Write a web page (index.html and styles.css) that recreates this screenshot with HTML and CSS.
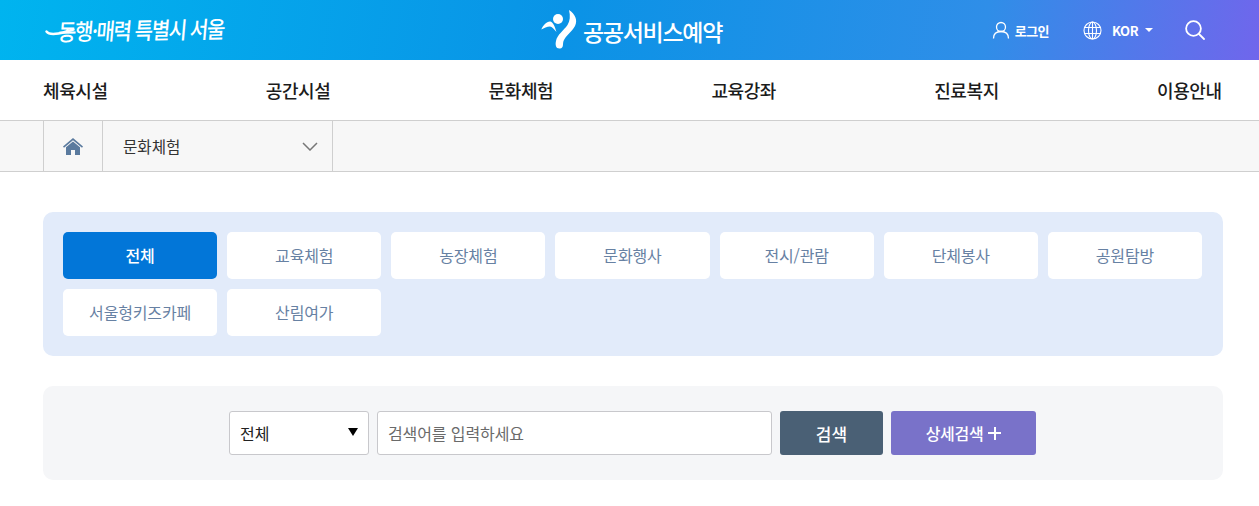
FILE: index.html
```html
<!DOCTYPE html>
<html lang="ko">
<head>
<meta charset="utf-8">
<title>공공서비스예약</title>
<link rel="stylesheet" href="styles.css">
</head>
<body>
<header class="top">
  <div class="wrap top-in">
    <a class="slogan">
      <svg class="flourish" width="30" height="10" viewBox="0 0 30 10" fill="none" stroke="#fff" stroke-width="2.400" stroke-linecap="round"><path d="M1.500 5.500c2 3 6 3 12 2s10-3 15-4"/></svg>
      <span>동행·매력 특별시 서울</span>
    </a>
    <a class="brand">
      <svg class="brand-mark" width="38" height="40" viewBox="0 0 38 40" fill="#fff"><circle cx="18" cy="9" r="5"/><path d="M1.300 19.500C3 15 7 11 10.500 11.500 13 12 15 17 16.500 22 14 19 12 16.500 10 16.500 7 16.500 4 18 1.300 19.500z"/><path d="M29 0C35 4 38 10 35 16 32 22 26 25 23.500 31 22.500 34 24 38 20 38.500 16 39 15 35 16 31 17 25 24 20 27.500 15 30 11 30.500 6 29 0z"/></svg>
      <span>공공서비스예약</span>
    </a>
    <div class="util">
      <a class="login">
        <svg width="18" height="18" viewBox="0 0 18 18" fill="none" stroke="#fff" stroke-width="1.300"><circle cx="9" cy="6" r="4.500"/><path d="M1.500 17.500c0-4.500 3-7 7.500-7s7.500 2.500 7.500 7"/></svg>
        <span>로그인</span>
      </a>
      <a class="lang">
        <svg width="19" height="19" viewBox="0 0 19 19" fill="none" stroke="#fff" stroke-width="1.100"><circle cx="9.500" cy="9.500" r="8.500"/><ellipse cx="9.500" cy="9.500" rx="4" ry="8.500"/><path d="M9.500 1v17M1.500 6.500h16M1.500 12.500h16"/></svg>
        <span>KOR</span>
        <i class="caret"></i>
      </a>
      <svg class="search-ico" width="20" height="20" viewBox="0 0 20 20" fill="none" stroke="#fff" stroke-width="1.800"><circle cx="8.500" cy="8.500" r="7.400"/><path d="M14 14l5 5" stroke-linecap="round"/></svg>
    </div>
  </div>
</header>

<nav class="gnb">
  <div class="wrap gnb-in">
    <a>체육시설</a><a>공간시설</a><a>문화체험</a><a>교육강좌</a><a>진료복지</a><a>이용안내</a>
  </div>
</nav>

<div class="crumb">
  <div class="wrap crumb-in">
    <a class="home">
      <svg width="20" height="17" viewBox="0 0 20 17"><path d="M10 0L0 8.500l1 1.200L10 2.300l9 7.400 1-1.200z" fill="#5a7a9e"/><path d="M10 3.500L3 9.300V17h5v-5h4v5h5V9.300z" fill="#5a7a9e"/></svg>
    </a>
    <div class="crumb-sel">
      <span>문화체험</span>
      <svg width="16" height="9" viewBox="0 0 16 9" fill="none" stroke="#777" stroke-width="1.500"><path d="M1 1l7 7 7-7"/></svg>
    </div>
  </div>
</div>

<main class="wrap main">
  <section class="cats">
    <a class="cat on">전체</a>
    <a class="cat">교육체험</a>
    <a class="cat">농장체험</a>
    <a class="cat">문화행사</a>
    <a class="cat">전시/관람</a>
    <a class="cat">단체봉사</a>
    <a class="cat">공원탐방</a>
    <a class="cat">서울형키즈카페</a>
    <a class="cat">산림여가</a>
  </section>
  <section class="search">
    <div class="sel"><span>전체</span><i class="tri"></i></div>
    <div class="inp">검색어를 입력하세요</div>
    <a class="btn go">검색</a>
    <a class="btn more">상세검색<b class="plus"></b></a>
  </section>
</main>
</body>
</html>
```

FILE: styles.css
```css
* { box-sizing: border-box; }
html, body { margin: 0; padding: 0; }
body {
  background: #fff;
  color: #222;
  font-family: "Noto Sans CJK KR", "Noto Sans", sans-serif;
  font-size: 15px;
}
.wrap { width: 1180px; margin-left: 43px; }

.top {
  height: 60px;
  background: linear-gradient(100deg, #00b4ef 0%, #0a93e6 45%, #2f8ee8 78%, #7066ec 100%);
  color: #fff;
}
.top-in { height: 60px; display: flex; align-items: center; position: relative; }
.slogan {
  width: 442px;
  height: 60px;
  margin-left: 2px;
  display: flex;
  align-items: center;
  white-space: nowrap;
}
.flourish { flex: none; margin-top: 2px; }
.slogan span {
  margin-left: -17px;
  font-size: 20px;
  font-weight: 500;
  letter-spacing: -1.400px;
  line-height: 60px;
  transform: rotate(-1deg) skewX(-6deg) scaleY(1.150);
}
.brand { display: flex; align-items: center; width: 400px; margin-left: 53px; height: 60px; }
.brand-mark { flex: none; }
.brand span { font-size: 23px; font-weight: 500; letter-spacing: -1.300px; margin-left: 5px; margin-top: 2px; }
.util { display: flex; align-items: center; margin-left: auto; padding-right: 18px; font-size: 13px; font-weight: 700; }
.login { display: flex; align-items: center; gap: 5px; margin-right: 34px; letter-spacing: -0.500px; }
.lang { display: flex; align-items: center; margin-right: 32px; letter-spacing: -0.500px; }
.lang span { margin-left: 10px; }
.caret {
  width: 0; height: 0; margin-left: 7px;
  border-left: 4px solid transparent;
  border-right: 4px solid transparent;
  border-top: 4px solid #fff;
}

.gnb { height: 61px; border-bottom: 1px solid #cfcfcf; }
.gnb-in { height: 60px; display: flex; justify-content: space-between; align-items: center; }
.gnb a { font-size: 18px; font-weight: 500; color: #1c1c1c; width: 65px; margin-right: 1px; white-space: nowrap; letter-spacing: -0.400px; }

.crumb { height: 51px; background: #f7f7f7; border-bottom: 1px solid #cfcfcf; }
.crumb-in { height: 50px; display: flex; }
.home {
  width: 60px;
  display: flex; align-items: center; justify-content: center;
  border-left: 1px solid #cfcfcf;
  border-right: 1px solid #cfcfcf;
}
.crumb-sel {
  width: 230px;
  display: flex; align-items: center; justify-content: space-between;
  padding: 0 14px 0 20px;
  border-right: 1px solid #cfcfcf;
  font-size: 15.600px;
  color: #333;
}

.main { padding-top: 40px; }
.cats {
  display: grid;
  grid-template-columns: repeat(7, 1fr);
  gap: 10px;
  padding: 20px 21px 20px 20px;
  background: #e2ebfa;
  border-radius: 10px;
}
.cat {
  height: 47px;
  padding-bottom: 2px;
  display: flex; align-items: center; justify-content: center;
  background: #fff;
  border-radius: 5px;
  font-size: 16px;
  letter-spacing: -0.150px;
  color: #6781a3;
}
.cat.on { background: #0276d8; color: #fff; font-weight: 500; }

.search {
  margin-top: 30px;
  height: 94px;
  padding-right: 1px;
  background: #f5f6f8;
  border-radius: 10px;
  display: flex; align-items: center; justify-content: center;
  gap: 8px;
}
.sel, .inp {
  height: 44px;
  background: #fff;
  border: 1px solid #c8c8cc;
  border-radius: 3px;
  display: flex; align-items: center;
}
.sel { width: 140px; justify-content: space-between; padding: 0 10px; font-size: 16px; color: #222; }
.tri {
  width: 0; height: 0;
  border-left: 5px solid transparent;
  border-right: 5px solid transparent;
  border-top: 8px solid #000;
  margin-top: -3px;
}
.inp { width: 395px; padding-left: 10px; font-size: 16px; letter-spacing: -0.100px; color: #6a6a6a; }
.btn {
  height: 44px;
  border-radius: 3px;
  color: #fff;
  display: flex; align-items: center; justify-content: center;
  font-weight: 500;
}
.go { width: 103px; background: #4a6075; font-size: 17px; }
.more { width: 145px; background: #7972c9; font-size: 16px; letter-spacing: -0.300px; }
.plus { position: relative; display: block; width: 13px; height: 13px; margin-left: 5px; }
.plus::before, .plus::after { content: ""; position: absolute; background: #fff; }
.plus::before { left: 0; right: 0; top: 5.500px; height: 2px; }
.plus::after { top: 0; bottom: 0; left: 5.500px; width: 2px; }
```
